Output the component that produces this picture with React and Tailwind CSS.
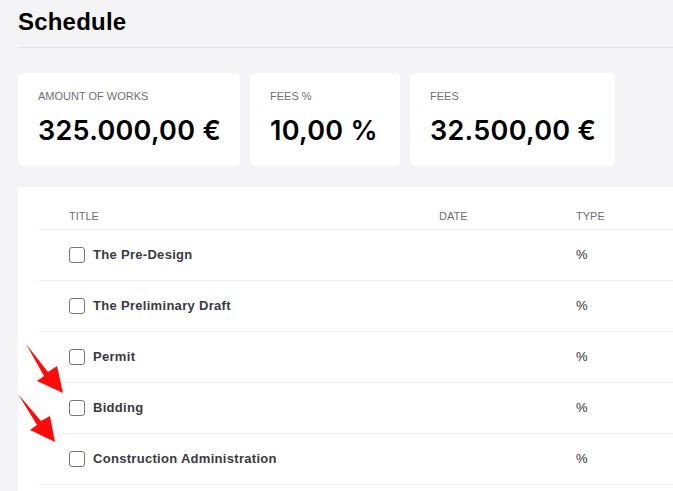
import React from "react";

const cards = [
  { label: "AMOUNT OF WORKS", value: "325.000,00 €", w: "w-[222px]" },
  { label: "FEES %", value: "10,00 %", w: "w-[150px]" },
  { label: "FEES", value: "32.500,00 €", w: "w-[205px]" },
];

const rows = [
  "The Pre-Design",
  "The Preliminary Draft",
  "Permit",
  "Bidding",
  "Construction Administration",
];

function Arrow({ points }) {
  return <polygon points={points} fill="#ff0a0a" />;
}

export default function App() {
  return (
    <div
      className="relative w-[673px] h-[491px] overflow-hidden bg-[#f4f4f6] text-black"
      style={{ fontFamily: '"Liberation Sans", Arial, sans-serif' }}
    >
      <div className="pl-[18px] w-[720px]">
        <div className="pt-[6px] pb-[9px] border-b border-[#e2e2e6]">
          <h1 className="text-[24px] leading-[32px] font-bold tracking-[0.2px]">Schedule</h1>
        </div>

        <div className="flex gap-[10px] mt-[25px]">
          {cards.map((c) => (
            <div
              key={c.label}
              className={`${c.w} h-[93px] bg-white rounded-[5px] pl-5 pt-[15px]`}
            >
              <div className="text-[11px] leading-[16px] text-[#6e6e78]">{c.label}</div>
              <div className="mt-[11px] text-[27px] leading-[32px] font-semibold tracking-[0.3px] whitespace-nowrap font-['Inter',sans-serif]">
                {c.value}
              </div>
            </div>
          ))}
        </div>

        <div className="mt-[21px] bg-white pl-5 pt-[21px] h-[400px]">
          <div className="flex pl-[31px] pb-[5px] border-b border-[#efeff1] text-[11px] leading-[16px] text-[#6e6e78]">
            <div className="w-[370px]">TITLE</div>
            <div className="w-[137px]">DATE</div>
            <div>TYPE</div>
          </div>
          {rows.map((r) => (
            <div
              key={r}
              className="flex items-center h-[51px] pl-[31px] border-b border-[#efeff1]"
            >
              <div className="w-[370px] flex items-center gap-2">
                <span className="w-4 h-4 rounded-[3px] border border-[#76767c] bg-white shrink-0" />
                <span className="text-[13px] font-bold text-[#3a3a42] tracking-[0.3px]">{r}</span>
              </div>
              <div className="w-[137px]" />
              <div className="text-[13px] text-[#2e2e36]">%</div>
            </div>
          ))}
        </div>
      </div>

      <svg className="absolute left-0 top-0 pointer-events-none" width="673" height="491">
        <Arrow points="26,344 48,372 57,366 63,393 37,381 44,376" />
        <Arrow points="18,394 41,421 50,416 55,442 30,430 37,425" />
      </svg>
    </div>
  );
}
